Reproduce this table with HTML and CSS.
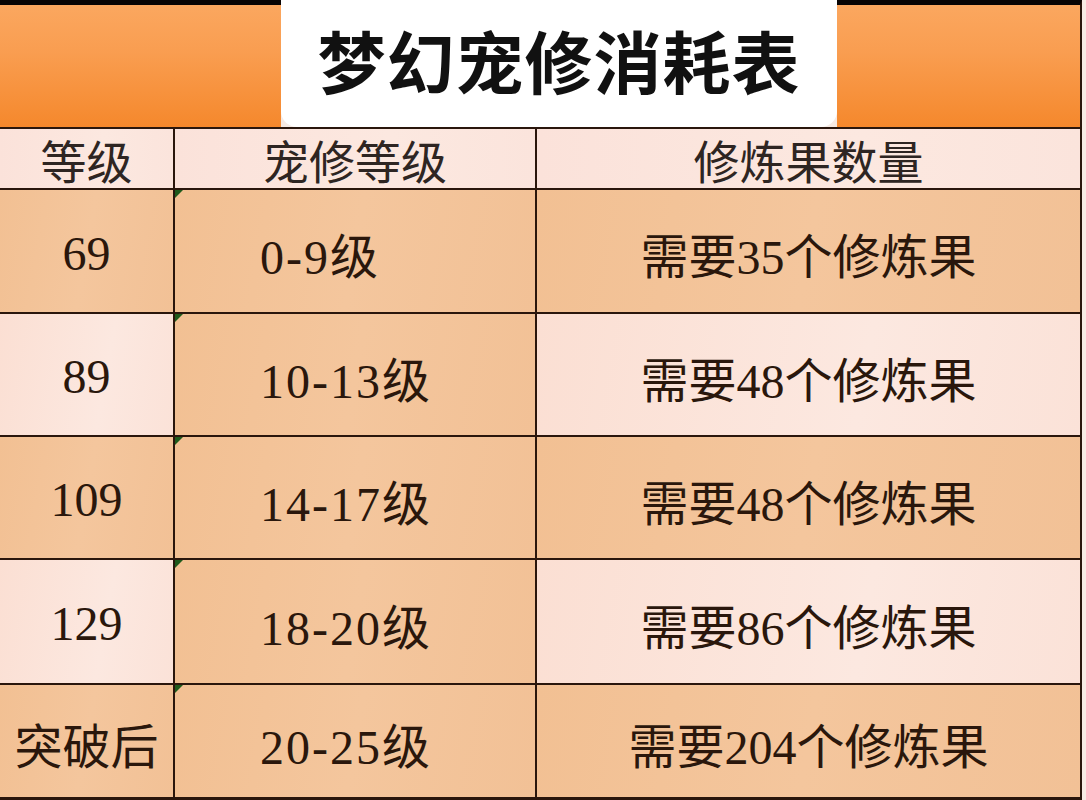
FILE: index.html
```html
<!DOCTYPE html>
<html lang="zh-CN">
<head>
<meta charset="utf-8">
<title>梦幻宠修消耗表</title>
<link rel="stylesheet" href="styles.css">
</head>
<body>
<div class="page">
  <div class="banner">
    <div class="band band-left"></div>
    <div class="title"><h1>梦幻宠修消耗表</h1></div>
    <div class="band band-right"></div>
  </div>
  <div class="sheet">
    <div class="grid">
      <div class="cell head">等级</div>
      <div class="cell head">宠修等级</div>
      <div class="cell head">修炼果数量</div>

      <div class="cell tan">69</div>
      <div class="cell tan range mark">0-9级</div>
      <div class="cell tan">需要35个修炼果</div>

      <div class="cell pink">89</div>
      <div class="cell tan range mark">10-13级</div>
      <div class="cell pink">需要48个修炼果</div>

      <div class="cell tan">109</div>
      <div class="cell tan range mark">14-17级</div>
      <div class="cell tan">需要48个修炼果</div>

      <div class="cell pink">129</div>
      <div class="cell tan range mark">18-20级</div>
      <div class="cell pink">需要86个修炼果</div>

      <div class="cell tan">突破后</div>
      <div class="cell tan range mark">20-25级</div>
      <div class="cell tan">需要204个修炼果</div>
    </div>
    <div class="edge"></div>
  </div>
</div>
</body>
</html>
```

FILE: styles.css
```css
* { box-sizing: border-box; }
html, body { margin: 0; padding: 0; }
body {
  width: 1086px;
  height: 800px;
  overflow: hidden;
  background: #f7ebe4;
}
.page {
  width: 1086px;
  height: 800px;
  display: flex;
  flex-direction: column;
}
.banner {
  height: 127px;
  display: flex;
}
.band {
  border-top: 5px solid #080404;
  background: linear-gradient(180deg, #fba75f 0%, #f99d50 40%, #f5882c 100%);
}
.band-left {
  width: 281px;
  flex: none;
}
.band-right {
  flex: 1;
  border-right: 2px solid #2a160c;
  margin-right: 4px;
}
.title {
  width: 556px;
  flex: none;
  background: #ffffff;
  border-radius: 0 0 16px 16px;
  display: flex;
  align-items: center;
  justify-content: center;
}
.title h1 {
  margin: 0 0 8px 0;
  font-family: "Noto Sans CJK SC", "Noto Sans", sans-serif;
  font-weight: 700;
  font-size: 68px;
  line-height: 1;
  color: #111111;
  letter-spacing: 1px;
}
.sheet {
  display: flex;
  height: 673px;
}
.grid {
  width: 1082px;
  display: grid;
  grid-template-columns: 173px 360px 543px;
  grid-template-rows: 59px 122px 121px 121px 123px 112px;
  gap: 2px;
  padding: 2px 2px 3px 0;
  background: #2a160c;
}
.edge {
  flex: 1;
  background: #f7ebe4;
}
.cell {
  position: relative;
  display: flex;
  align-items: center;
  justify-content: center;
  font-family: "Liberation Serif", "Noto Sans CJK SC", serif;
  font-size: 48px;
  color: #2a170c;
  padding-top: 4px;
}
.head {
  background: linear-gradient(90deg, #fbe2da 0%, #fce8e0 60%, #fbe4dc 100%);
  font-size: 46px;
  color: #2e2522;
  padding-top: 0;
}
.tan {
  background: linear-gradient(100deg, #f2c093 0%, #f4c69d 50%, #f2c196 100%);
}
.pink {
  background: linear-gradient(100deg, #fbdfd3 0%, #fce8e0 60%, #fbe2d8 100%);
}
.range {
  justify-content: flex-start;
  padding-left: 85px;
  letter-spacing: 2px;
}
.mark::before {
  content: "";
  position: absolute;
  left: 0;
  top: 0;
  width: 0;
  height: 0;
  border-top: 8px solid #1f5a1c;
  border-right: 8px solid transparent;
}
```
